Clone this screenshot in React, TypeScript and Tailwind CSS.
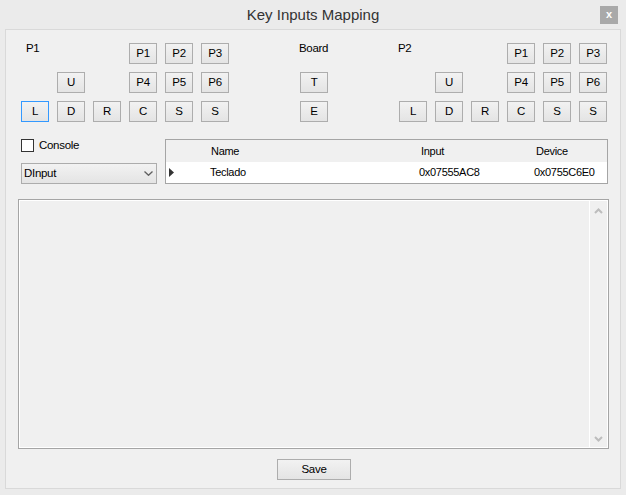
import type { ReactNode } from "react";

const ui = "font-['Liberation_Sans',Arial,sans-serif] tracking-[-0.3px]";

function Key({ label, focused = false }: { label: string; focused?: boolean }) {
  return (
    <button
      type="button"
      className={`flex h-[21px] w-[28px] items-center justify-center border bg-linear-to-b from-[#f2f2f2] to-[#e4e4e4] text-[11.5px] leading-none text-black ${
        focused ? "border-[#3399ff]" : "border-[#adadad]"
      }`}
    >
      {label}
    </button>
  );
}

function Label({ children }: { children: ReactNode }) {
  return <div className="-mt-px text-[11.5px] leading-[13px] text-black">{children}</div>;
}

function PlayerKeys({ name }: { name: string }) {
  const first = name === "P1";
  return (
    <div className="grid grid-cols-[repeat(6,28px)] grid-rows-[repeat(3,21px)] gap-2">
      <div className={`col-start-1 row-start-1 ${first ? "pl-[5px]" : "-ml-px"}`}>
        <Label>{name}</Label>
      </div>
      <div className="col-start-4 row-start-1"><Key label="P1" /></div>
      <div className="col-start-5 row-start-1"><Key label="P2" /></div>
      <div className="col-start-6 row-start-1"><Key label="P3" /></div>
      <div className="col-start-2 row-start-2"><Key label="U" /></div>
      <div className="col-start-4 row-start-2"><Key label="P4" /></div>
      <div className="col-start-5 row-start-2"><Key label="P5" /></div>
      <div className="col-start-6 row-start-2"><Key label="P6" /></div>
      <div className="col-start-1 row-start-3"><Key label="L" focused={first} /></div>
      <div className="col-start-2 row-start-3"><Key label="D" /></div>
      <div className="col-start-3 row-start-3"><Key label="R" /></div>
      <div className="col-start-4 row-start-3"><Key label="C" /></div>
      <div className="col-start-5 row-start-3"><Key label="S" /></div>
      <div className="col-start-6 row-start-3"><Key label="S" /></div>
    </div>
  );
}

export default function App() {
  return (
    <div className={`flex h-[495px] w-[626px] flex-col bg-[#ebebeb] ${ui}`}>
      <div className="grid h-[29px] grid-cols-[1fr_auto_1fr] items-center">
        <div />
        <div className="text-[15px] leading-none tracking-normal text-[#333]">Key Inputs Mapping</div>
        <div className="flex justify-end pr-[8px]">
          <div className="flex h-[18px] w-[18px] items-center justify-center bg-[#a9a9a9] text-[11px] font-bold leading-none text-white">
            x
          </div>
        </div>
      </div>

      <div className="mx-[5px] flex h-[460px] flex-col border border-[#d9d9d9] bg-[#f0f0f0]">
        <div className="flex pl-[15px] pt-[13px]">
          <PlayerKeys name="P1" />
          <div className="ml-[71px] grid grid-cols-[28px] grid-rows-[repeat(3,21px)] gap-2">
            <div className="-ml-px whitespace-nowrap">
              <Label>Board</Label>
            </div>
            <Key label="T" />
            <Key label="E" />
          </div>
          <div className="ml-[71px]">
            <PlayerKeys name="P2" />
          </div>
        </div>

        <div className="mt-[17px] flex gap-2 pl-[15px]">
          <div className="flex w-[136px] flex-col">
            <div className="flex h-[13px] items-center gap-[5px]">
              <div className="h-[13px] w-[13px] border border-[#333] bg-white" />
              <span className="text-[11.5px] leading-none text-black">Console</span>
            </div>
            <div className="mt-[11px] flex h-[21px] items-center justify-between border border-[#acacac] bg-linear-to-b from-[#f2f2f2] to-[#e4e4e4] pl-[2px] pr-[3px]">
              <span className="text-[11.5px] leading-none text-black">DInput</span>
              <svg width="9" height="5" viewBox="0 0 9 5">
                <path d="M0.5 0.5 L4.5 4.3 L8.5 0.5" fill="none" stroke="#606060" strokeWidth="1.3" />
              </svg>
            </div>
          </div>

          <div className="flex h-[45px] w-[443px] flex-col border border-[#a5a5a5] text-[11px] leading-none text-black">
            <div className="flex h-[22px] items-center bg-[#f0f0f0]">
              <div className="w-[40px]" />
              <div className="w-[209px] pl-[5px]">Name</div>
              <div className="w-[115px] pl-[6px]">Input</div>
              <div className="flex-1 pl-[6px]">Device</div>
            </div>
            <div className="flex h-[21px] items-center bg-white">
              <div className="flex w-[40px] pl-[3px]">
                <svg width="5" height="9" viewBox="0 0 5 9">
                  <path d="M0 0 L5 4.5 L0 9 Z" fill="#333" />
                </svg>
              </div>
              <div className="w-[209px] pl-[4px]">Teclado</div>
              <div className="w-[115px] pl-[4px]">0x07555AC8</div>
              <div className="flex-1 pl-[4px]">0x0755C6E0</div>
            </div>
          </div>
        </div>

        <div className="ml-[12px] mt-[15px] h-[250px] w-[591px] border border-[#a5a5a5]">
          <div className="flex h-full border border-white">
            <div className="flex-1" />
            <div className="flex w-[18px] flex-col items-center justify-between border-l border-white pb-[5px] pt-[7px]">
              <svg width="9" height="6" viewBox="0 0 9 6">
                <path d="M1 5 L4.5 1.5 L8 5" fill="none" stroke="#bdbdbd" strokeWidth="2" />
              </svg>
              <svg width="9" height="6" viewBox="0 0 9 6">
                <path d="M1 1 L4.5 4.5 L8 1" fill="none" stroke="#bdbdbd" strokeWidth="2" />
              </svg>
            </div>
          </div>
        </div>

        <div className="mt-[10px] flex justify-center">
          <button
            type="button"
            className="ml-[2px] flex h-[21px] w-[74px] items-center justify-center border border-[#adadad] bg-linear-to-b from-[#f2f2f2] to-[#e4e4e4] text-[11.5px] leading-none text-black"
          >
            Save
          </button>
        </div>
      </div>
    </div>
  );
}
